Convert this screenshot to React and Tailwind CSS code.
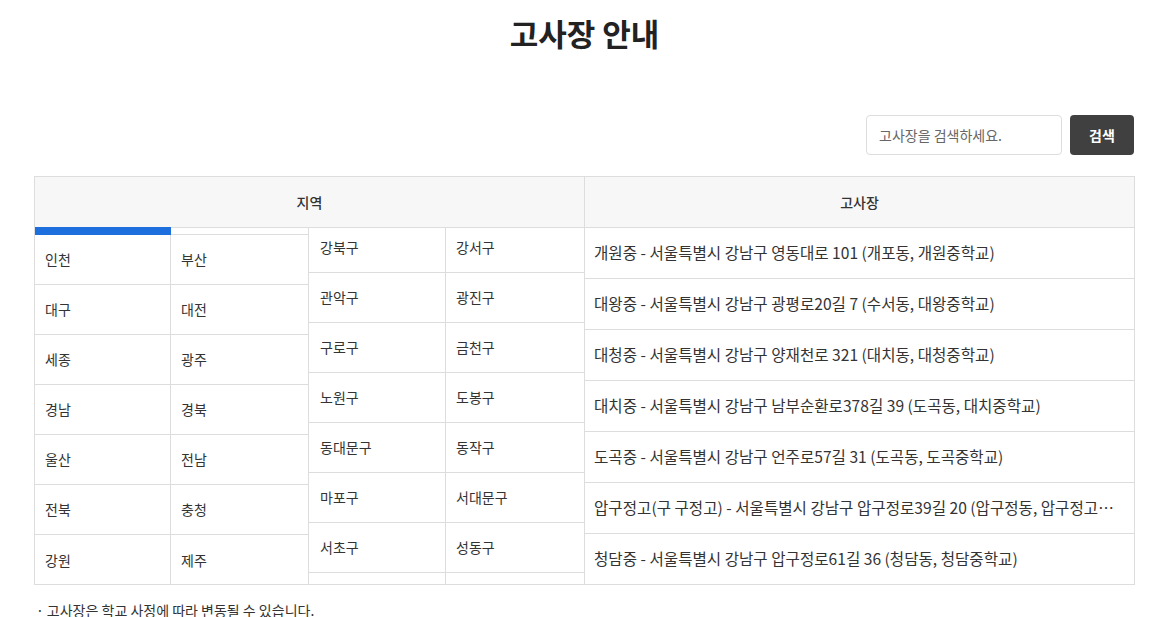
import React from "react";

const provinces = [
  ["인천", "부산"],
  ["대구", "대전"],
  ["세종", "광주"],
  ["경남", "경북"],
  ["울산", "전남"],
  ["전북", "충청"],
  ["강원", "제주"],
];

const districts = [
  ["강남구", "강동구"],
  ["강북구", "강서구"],
  ["관악구", "광진구"],
  ["구로구", "금천구"],
  ["노원구", "도봉구"],
  ["동대문구", "동작구"],
  ["마포구", "서대문구"],
  ["서초구", "성동구"],
  ["성북구", "송파구"],
  ["양천구", "영등포구"],
  ["용산구", "은평구"],
  ["종로구", "중구"],
  ["중랑구", ""],
];

const sites = [
  "개원중 - 서울특별시 강남구 영동대로 101 (개포동, 개원중학교)",
  "대왕중 - 서울특별시 강남구 광평로20길 7 (수서동, 대왕중학교)",
  "대청중 - 서울특별시 강남구 양재천로 321 (대치동, 대청중학교)",
  "대치중 - 서울특별시 강남구 남부순환로378길 39 (도곡동, 대치중학교)",
  "도곡중 - 서울특별시 강남구 언주로57길 31 (도곡동, 도곡중학교)",
  "압구정고(구 구정고) - 서울특별시 강남구 압구정로39길 20 (압구정동, 압구정고등학교)",
  "청담중 - 서울특별시 강남구 압구정로61길 36 (청담동, 청담중학교)",
];

export default function App() {
  return (
    <div
      className="w-[1163px] bg-white text-[#333]"
      style={{ fontFamily: '"Noto Sans CJK KR", "Noto Sans", sans-serif' }}
    >
      <div className="ml-[34px] w-[1101px]">
        <h1 className="pt-[12px] text-center text-[31px] font-bold leading-[42px] text-[#222]">
          고사장 안내
        </h1>

        <div className="mt-[61px] mr-[1px] flex justify-end gap-[8px]">
          <input
            type="text"
            placeholder="고사장을 검색하세요."
            className="h-[40px] w-[196px] rounded-[4px] border border-[#dddddd] px-[12px] text-[14px] text-[#333] outline-none placeholder:text-[#666]"
          />
          <button className="h-[40px] w-[64px] rounded-[4px] bg-[#404040] text-[14px] font-semibold text-white">
            검색
          </button>
        </div>

        <div className="mt-[21px] border border-[#dddddd]">
          <div className="flex h-[51px] border-b border-[#dddddd] bg-[#f7f7f7] text-[14px] font-medium text-[#333]">
            <div className="flex w-[549px] items-center justify-center">지역</div>
            <div className="flex flex-1 items-center justify-center border-l border-[#dddddd]">고사장</div>
          </div>

          <div className="flex h-[356px]">
            <div className="flex w-[549px]">
              <div className="relative w-[273px] pt-[6px] text-[14px]">
                <div className="absolute left-0 top-[-1px] h-[8px] w-[136px] bg-[#1c6fdc]" />
                <div className="border-t border-[#dddddd]">
                  {provinces.map((row, i) => (
                    <div
                      key={i}
                      className={`flex h-[50px] ${i < provinces.length - 1 ? "border-b border-[#dddddd]" : ""}`}
                    >
                      <div className="flex w-[135px] items-center px-[10px]">{row[0]}</div>
                      <div className="flex flex-1 items-center border-l border-[#dddddd] px-[10px]">{row[1]}</div>
                    </div>
                  ))}
                </div>
              </div>

              <div className="flex-1 overflow-hidden border-l border-[#dddddd] text-[14px]">
                <div className="-mt-[55px]">
                  {districts.map((row, i) => (
                    <div key={i} className="flex h-[50px] border-b border-[#dddddd]">
                      <div className="flex w-[136px] items-center px-[11px]">{row[0]}</div>
                      <div className="flex flex-1 items-center border-l border-[#dddddd] px-[10px]">{row[1]}</div>
                    </div>
                  ))}
                </div>
              </div>
            </div>

            <div className="min-w-0 flex-1 border-l border-[#dddddd] text-[15.6px]">
              {sites.map((s, i) => (
                <div
                  key={i}
                  className={`flex items-center px-[9px] ${i < sites.length - 1 ? "h-[51px] border-b border-[#dddddd]" : "h-[50px]"}`}
                >
                  <span className="truncate">{s}</span>
                </div>
              ))}
            </div>
          </div>
        </div>

        <p className="mt-[17px] pl-[2px] text-[14px] leading-[17px] text-[#333]">
          <span className="mr-[3px]">·</span>고사장은 학교 사정에 따라 변동될 수 있습니다.
        </p>
        <div className="h-[20px]" />
      </div>
    </div>
  );
}
